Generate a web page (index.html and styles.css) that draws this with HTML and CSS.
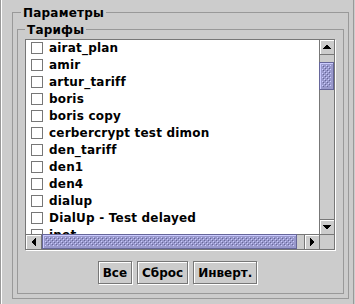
FILE: index.html
```html
<!DOCTYPE html>
<html lang="ru">
<head>
    <meta charset="UTF-8">
    <title>Параметры</title>
    <link rel="stylesheet" href="styles.css">
</head>
<body>
    <div class="window">
        <fieldset class="group params">
            <legend>Параметры</legend>

            <fieldset class="group tariffs">
                <legend>Тарифы</legend>

                <div class="scroll">
                    <div class="viewport">
                        <label class="row"><input type="checkbox" class="box">airat_plan</label>
                        <label class="row"><input type="checkbox" class="box">amir</label>
                        <label class="row"><input type="checkbox" class="box">artur_tariff</label>
                        <label class="row"><input type="checkbox" class="box">boris</label>
                        <label class="row"><input type="checkbox" class="box">boris copy</label>
                        <label class="row"><input type="checkbox" class="box">cerbercrypt test dimon</label>
                        <label class="row"><input type="checkbox" class="box">den_tariff</label>
                        <label class="row"><input type="checkbox" class="box">den1</label>
                        <label class="row"><input type="checkbox" class="box">den4</label>
                        <label class="row"><input type="checkbox" class="box">dialup</label>
                        <label class="row"><input type="checkbox" class="box">DialUp - Test delayed</label>
                        <label class="row"><input type="checkbox" class="box">inet</label>
                    </div>

                    <!-- vertical scrollbar -->
                    <div class="vbar">
                        <div class="sbtn up">
                            <svg width="8" height="4"><rect x="3" y="0" width="2" height="1"/><rect x="2" y="1" width="4" height="1"/><rect x="1" y="2" width="6" height="1"/><rect x="0" y="3" width="8" height="1"/></svg>
                        </div>
                        <div class="vtrack">
                            <div class="thumb vthumb">
                                <svg class="bumps"><defs><pattern id="bv" width="4" height="4" patternUnits="userSpaceOnUse"><rect x="0" y="0" width="1" height="1" fill="#ccccff"/><rect x="2" y="2" width="1" height="1" fill="#ccccff"/><rect x="1" y="1" width="1" height="1" fill="#666699"/><rect x="3" y="3" width="1" height="1" fill="#666699"/></pattern></defs><rect width="100%" height="100%" fill="url(#bv)"/></svg>
                            </div>
                        </div>
                        <div class="sbtn down">
                            <svg width="8" height="4"><rect x="0" y="0" width="8" height="1"/><rect x="1" y="1" width="6" height="1"/><rect x="2" y="2" width="4" height="1"/><rect x="3" y="3" width="2" height="1"/></svg>
                        </div>
                    </div>

                    <!-- horizontal scrollbar -->
                    <div class="hbar">
                        <div class="sbtn left">
                            <svg width="4" height="8"><rect x="0" y="3" width="1" height="2"/><rect x="1" y="2" width="1" height="4"/><rect x="2" y="1" width="1" height="6"/><rect x="3" y="0" width="1" height="8"/></svg>
                        </div>
                        <div class="htrack">
                            <div class="thumb hthumb">
                                <svg class="bumps"><defs><pattern id="bh" width="4" height="4" patternUnits="userSpaceOnUse"><rect x="0" y="0" width="1" height="1" fill="#ccccff"/><rect x="2" y="2" width="1" height="1" fill="#ccccff"/><rect x="1" y="1" width="1" height="1" fill="#666699"/><rect x="3" y="3" width="1" height="1" fill="#666699"/></pattern></defs><rect width="100%" height="100%" fill="url(#bh)"/></svg>
                            </div>
                        </div>
                        <div class="sbtn right">
                            <svg width="4" height="8"><rect x="0" y="0" width="1" height="8"/><rect x="1" y="1" width="1" height="6"/><rect x="2" y="2" width="1" height="4"/><rect x="3" y="3" width="1" height="2"/></svg>
                        </div>
                    </div>

                    <div class="corner"></div>
                </div>

                <div class="actions">
                    <button>Все</button>
                    <button>Сброс</button>
                    <button>Инверт.</button>
                </div>
            </fieldset>
        </fieldset>
    </div>
</body>
</html>
```

FILE: styles.css
```css
* {
    margin: 0;
    padding: 0;
    box-sizing: border-box;
}

body {
    background: #cccccc;
    font-family: "DejaVu Sans", "Liberation Sans", sans-serif;
    font-size: 12px;
    font-weight: bold;
    letter-spacing: 0.2px;
    color: #000;
}

.window {
    width: 354px;
    height: 304px;
    padding-top: 4px;
    border-left: 1px solid #999999;
    border-right: 1px solid #999999;
    box-shadow: inset 1px 0 0 #ffffff;
}

/* titled borders */
.group {
    border: 1px solid #999999;
    min-width: 0;
}

.group > legend {
    padding: 2px 2px 0;
    line-height: 15px;
}

.params {
    width: 337px;
    margin-left: 11px;
    padding: 0 4px 4px;
}

.params > legend {
    margin-left: 4px;
}

.tariffs {
    padding: 1px 7px 9px;
}

/* scroll pane */
.scroll {
    display: grid;
    grid-template-columns: 293px 15px;
    grid-template-rows: 194px 15px;
    width: 310px;
    height: 211px;
    border: 1px solid #777777;
    box-shadow: 1px 1px 0 #ffffff;
    background: #cccccc;
}

.viewport {
    background: #ffffff;
    overflow: hidden;
}

.row {
    display: flex;
    height: 17px;
    line-height: 17px;
    padding-left: 5px;
    white-space: nowrap;
}

.box {
    appearance: none;
    flex: none;
    width: 12px;
    height: 12px;
    margin: 2px 6px 0 0;
    border: 1px solid #777777;
    background: #ffffff;
}

/* scrollbars */
.vbar {
    display: flex;
    flex-direction: column;
}

.hbar {
    display: flex;
}

.sbtn {
    flex: none;
    display: flex;
    align-items: center;
    justify-content: center;
    background: #cccccc;
    box-shadow: inset 1px 1px 0 #ffffff;
}

.sbtn svg {
    display: block;
    fill: #000;
    shape-rendering: crispEdges;
}

.up {
    height: 15px;
    border-left: 1px solid #777777;
    border-bottom: 1px solid #777777;
}

.down {
    height: 15px;
    border-left: 1px solid #777777;
    border-top: 1px solid #777777;
}

.left {
    width: 16px;
    border-top: 1px solid #777777;
    border-right: 1px solid #777777;
}

.right {
    width: 15px;
    border-top: 1px solid #777777;
    border-left: 1px solid #777777;
}

.vtrack {
    flex: 1;
    box-shadow: inset 1px 0 0 #777777;
}

.htrack {
    flex: 1;
    display: flex;
    box-shadow: inset 0 1px 0 #777777;
}

.thumb {
    background: #9999cc;
    border: 1px solid #666699;
    box-shadow: inset 1px 1px 0 #ccccff;
    padding: 2px;
}

.vthumb {
    height: 28px;
    margin-top: 7px;
}

.hthumb {
    width: 255px;
}

.bumps {
    display: block;
    width: 100%;
    height: 100%;
}

.corner {
    border-left: 1px solid #777777;
    border-top: 1px solid #777777;
}

/* buttons */
.actions {
    display: flex;
    justify-content: center;
    gap: 5px;
    margin-top: 11px;
    padding-right: 6px;
}

.actions button {
    height: 23px;
    padding: 1px 4px 0;
    font: inherit;
    letter-spacing: 0;
    color: #000;
    background: #cccccc;
    border: 1px solid #777777;
    box-shadow: inset 1px 1px 0 #ffffff, 1px 1px 0 #ffffff;
}
```
